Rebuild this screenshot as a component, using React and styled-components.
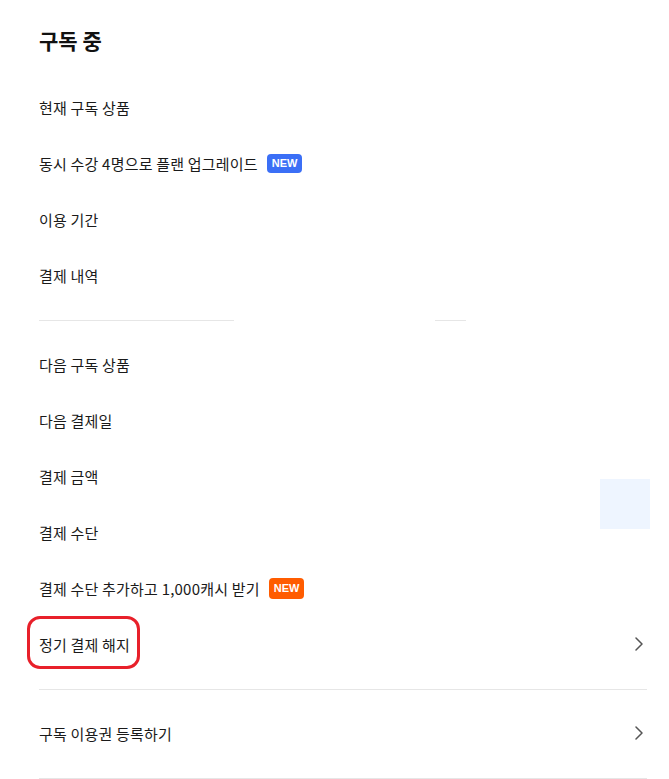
import styled, { createGlobalStyle } from 'styled-components';

const GlobalStyle = createGlobalStyle`
  body {
    margin: 0;
    background: #ffffff;
    font-family: 'Noto Sans CJK KR', 'Noto Sans', sans-serif;
    color: #1a1a1a;
  }
`;

function Chevron() {
  return (
    <svg width="8" height="14" viewBox="0 0 8 14" fill="none">
      <path d="M1 1l6 6-6 6" stroke="#555555" strokeWidth="1.5" strokeLinecap="round" strokeLinejoin="round" />
    </svg>
  );
}

const currentRows = [
  { label: '현재 구독 상품' },
  { label: '동시 수강 4명으로 플랜 업그레이드', badge: 'blue' },
  { label: '이용 기간' },
  { label: '결제 내역' },
];

const nextRows = [
  { label: '다음 구독 상품' },
  { label: '다음 결제일' },
  { label: '결제 금액' },
  { label: '결제 수단' },
  { label: '결제 수단 추가하고 1,000캐시 받기', badge: 'orange' },
];

function MenuRow({ label, badge, arrow, marked }) {
  return (
    <Row>
      <Label $marked={marked}>{label}</Label>
      {badge && <Badge $tone={badge}>NEW</Badge>}
      {arrow && (
        <Arrow>
          <Chevron />
        </Arrow>
      )}
    </Row>
  );
}

export default function App() {
  return (
    <>
      <GlobalStyle />
      <Page>
        <Title>구독 중</Title>
        {currentRows.map((row) => (
          <MenuRow key={row.label} {...row} />
        ))}
        <SplitDivider>
          <Line $width="195px" />
          <Line $width="31px" />
        </SplitDivider>
        {nextRows.map((row) => (
          <MenuRow key={row.label} {...row} />
        ))}
        <MenuRow label="정기 결제 해지" arrow marked />
        <Divider />
        <MenuRow label="구독 이용권 등록하기" arrow />
        <Divider />
        <Ghost />
      </Page>
    </>
  );
}

const Page = styled.div`
  position: relative;
  width: 608px;
  padding: 25px 0 0 39px;
`;

const Title = styled.h2`
  margin: 0 0 24px;
  font-size: 21px;
  line-height: 30px;
  font-weight: 700;
  color: #111111;
`;

const Row = styled.div`
  display: flex;
  align-items: center;
  height: 56px;
`;

const Label = styled.span`
  position: relative;
  font-size: 15px;
  letter-spacing: 0.2px;
  color: #1a1a1a;

  ${({ $marked }) =>
    $marked &&
    `
    &::after {
      content: '';
      position: absolute;
      left: -12px;
      right: -10px;
      top: -18px;
      bottom: -14px;
      border: 3px solid #e8202a;
      border-radius: 13px;
    }
  `}
`;

const Badge = styled.span`
  display: inline-flex;
  align-items: center;
  justify-content: center;
  margin-left: 9px;
  height: ${({ $tone }) => ($tone === 'orange' ? '21px' : '19px')};
  padding: 0 5px;
  border-radius: 4px;
  background: ${({ $tone }) => ($tone === 'orange' ? '#ff5c00' : '#3b6ff6')};
  color: #ffffff;
  font-family: 'Liberation Sans', Arial, sans-serif;
  font-size: 11px;
  font-weight: 700;
`;

const Arrow = styled.span`
  display: flex;
  margin-left: auto;
  margin-right: 4px;
`;

const Divider = styled.div`
  height: 1px;
  margin: 17px 0 15px;
  background: #e6e6e6;
`;

const SplitDivider = styled.div`
  display: flex;
  gap: 201px;
  margin: 17px 0 15px;
`;

const Line = styled.div`
  width: ${({ $width }) => $width};
  height: 1px;
  background: #e6e6e6;
`;

const Ghost = styled.div`
  position: absolute;
  left: 600px;
  top: 479px;
  width: 50px;
  height: 50px;
  background: #eef5ff;
`;
